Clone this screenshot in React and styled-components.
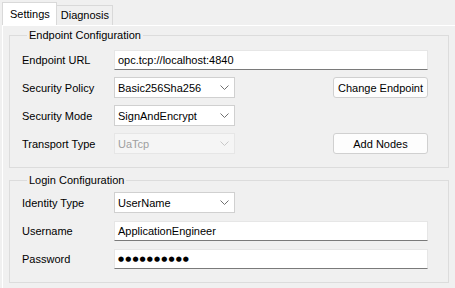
import React from 'react';
import styled, { createGlobalStyle } from 'styled-components';

const GlobalStyle = createGlobalStyle`
  html, body {
    margin: 0;
    padding: 0;
    background: #f0f0f0;
  }
  body {
    font-family: 'Liberation Sans', Arial, sans-serif;
    font-size: 11px;
    color: #000;
  }
`;

const Window = styled.div`
  width: 455px;
  height: 288px;
  overflow: hidden;
  background: #f0f0f0;
  display: flex;
  flex-direction: column;
`;

const TabStrip = styled.div`
  display: flex;
  align-items: flex-end;
  height: 25px;
  padding-left: 2px;
`;

const Tab = styled.div`
  box-sizing: border-box;
  height: ${p => (p.$active ? '23px' : '20px')};
  padding: ${p => (p.$active ? '0 6px 0 7px' : '0 3px 0 4px')};
  background: ${p => (p.$active ? '#ffffff' : '#f0f0f0')};
  border: 1px solid #d9d9d9;
  border-bottom: none;
  ${p => (!p.$active ? 'border-left: none;' : '')}
  display: flex;
  align-items: center;
  line-height: 1;
`;

const TabPage = styled.div`
  flex: 1;
  margin-left: 2px;
  border-top: 1px solid #ffffff;
  border-left: 1px solid #ffffff;
  padding: 2px 6px 0 6px;
  display: flex;
  flex-direction: column;
  gap: 5px;
`;

const Group = styled.fieldset`
  margin: 0;
  min-width: 0;
  border: 1px solid #dcdcdc;
  padding: 0 20px ${p => p.$bottom}px 12px;
`;

const Legend = styled.legend`
  padding: 0 2px;
  margin-left: 5px;
  line-height: 14px;
  height: 14px;
`;

const Grid = styled.div`
  display: grid;
  grid-template-columns: 92px 121px 1fr 95px;
  grid-auto-rows: 21px;
  row-gap: 7px;
  align-items: center;
  padding-top: ${p => p.$top}px;
`;

const Label = styled.div`
  grid-column: 1;
  white-space: nowrap;
`;

const Combo = styled.div`
  grid-column: 2;
  box-sizing: border-box;
  height: 21px;
  background: ${p => (p.$disabled ? '#f5f5f5' : '#ffffff')};
  border: 1px solid ${p => (p.$disabled ? '#e6e6e6' : '#d0d0d0')};
  color: ${p => (p.$disabled ? '#a0a0a0' : '#000')};
  display: flex;
  align-items: center;
  justify-content: space-between;
  padding: 0 5px 0 3px;
  white-space: nowrap;
`;

const TextBox = styled.div`
  grid-column: 2 / 5;
  box-sizing: border-box;
  height: 20px;
  background: #ffffff;
  border: 1px solid #e6e6e6;
  border-bottom-color: #7a7a7a;
  display: flex;
  align-items: center;
  padding: 0 3px;
  white-space: nowrap;
`;

const Dots = styled.span`
  font-family: 'DejaVu Sans', sans-serif;
  font-size: 7px;
  letter-spacing: 1.1px;
`;

const Button = styled.div`
  grid-column: 4;
  box-sizing: border-box;
  height: 21px;
  background: #fdfdfd;
  border: 1px solid #d0d0d0;
  border-radius: 3px;
  display: flex;
  align-items: center;
  justify-content: center;
  white-space: nowrap;
`;

const Chevron = ({ disabled }) => (
  <svg width="9" height="5" viewBox="0 0 9 5">
    <polyline points="0.5,0.5 4.5,4.5 8.5,0.5" fill="none"
      stroke={disabled ? '#c8c8c8' : '#707070'} strokeWidth="1" />
  </svg>
);

const Select = ({ value, disabled }) => (
  <Combo $disabled={disabled}>
    <span>{value}</span>
    <Chevron disabled={disabled} />
  </Combo>
);

export default function App() {
  return (
    <>
      <GlobalStyle />
      <Window>
        <TabStrip>
          <Tab $active>Settings</Tab>
          <Tab>Diagnosis</Tab>
        </TabStrip>
        <TabPage>
          <Group $bottom={13}>
            <Legend>Endpoint Configuration</Legend>
            <Grid $top={7}>
              <Label>Endpoint URL</Label>
              <TextBox>opc.tcp://localhost:4840</TextBox>
              <Label>Security Policy</Label>
              <Select value="Basic256Sha256" />
              <Button>Change Endpoint</Button>
              <Label>Security Mode</Label>
              <Select value="SignAndEncrypt" />
              <Label>Transport Type</Label>
              <Select value="UaTcp" disabled />
              <Button>Add Nodes</Button>
            </Grid>
          </Group>
          <Group $bottom={13}>
            <Legend>Login Configuration</Legend>
            <Grid $top={5}>
              <Label>Identity Type</Label>
              <Select value="UserName" />
              <Label>Username</Label>
              <TextBox>ApplicationEngineer</TextBox>
              <Label>Password</Label>
              <TextBox><Dots>●●●●●●●●●●</Dots></TextBox>
            </Grid>
          </Group>
        </TabPage>
      </Window>
    </>
  );
}
